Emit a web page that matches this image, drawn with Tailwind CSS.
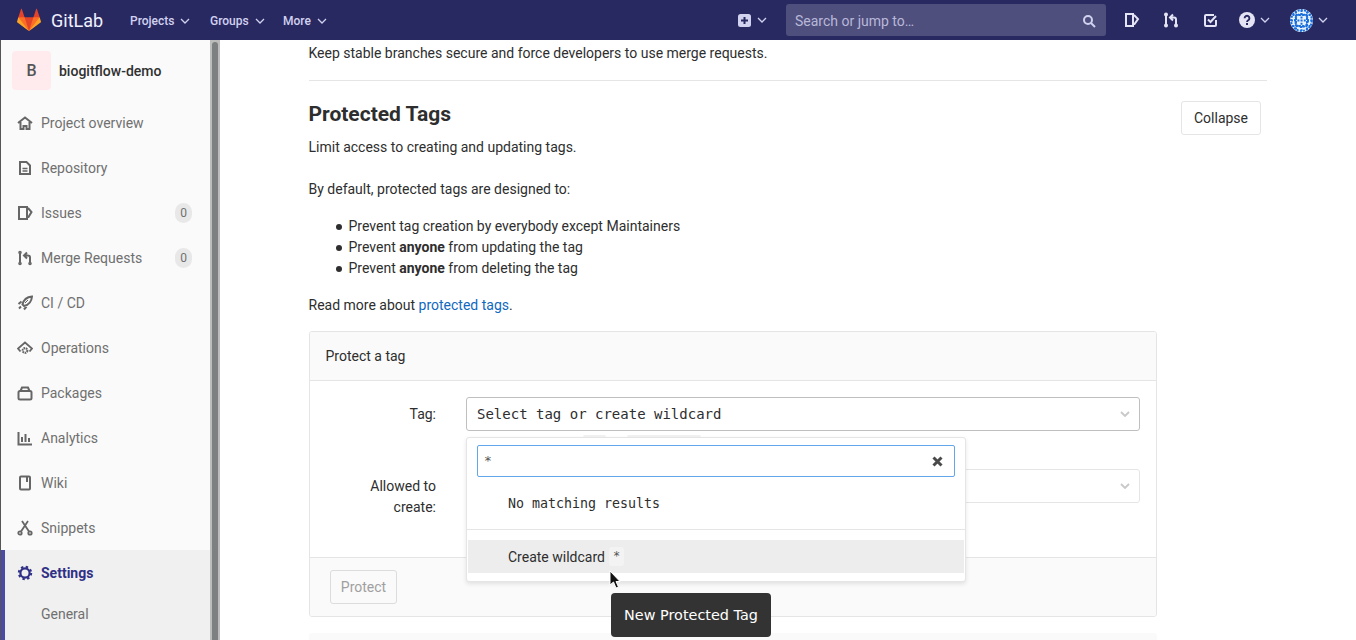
<!DOCTYPE html>
<html lang="en">
<head>
  <meta charset="UTF-8" />
  <title>Protected Tags - GitLab</title>
  <script src="https://cdn.jsdelivr.net/npm/@tailwindcss/browser@4"></script>
</head>
<body class="relative h-[640px] w-[1356px] overflow-hidden bg-white font-['Roboto',sans-serif] text-sm text-[#2e2e2e]">
  <!-- top nav -->
  <nav class="flex h-10 items-center bg-[#292961] pl-[17px] text-[#d1d1f0]">
    <svg width="24" height="24" viewBox="0 0 36 36">
      <path fill="#e24329" d="M2 14l9.38 9v-9l-4-12.28c-.205-.632-1.176-.632-1.38 0z"/>
      <path fill="#e24329" d="M34 14l-9.38 9v-9l4-12.28c.205-.632 1.176-.632 1.38 0z"/>
      <path fill="#e24329" d="M18,34.38 3,14 33,14 Z"/>
      <path fill="#fc6d26" d="M18,34.38 11.38,14 2,14 6,25Z"/>
      <path fill="#fc6d26" d="M18,34.38 24.62,14 34,14 30,25Z"/>
      <path fill="#fca326" d="M2 14L.1 20.16c-.18.565 0 1.2.5 1.56l17.42 12.66z"/>
      <path fill="#fca326" d="M34 14l1.9 6.16c.18.565 0 1.2-.5 1.56L18 34.38z"/>
    </svg>
    <span class="ml-[10px] w-[79px] pt-[1px] text-[18px] text-[#f0f0ff]">GitLab</span>
    <span class="flex w-[80px] items-center gap-[6px] pt-[1px] text-xs font-medium">Projects
      <svg width="10" height="10" viewBox="0 0 10 10" fill="none" stroke="currentColor" stroke-width="1.3"><path d="M1 3l4 4 4-4"/></svg></span>
    <span class="flex w-[73px] items-center gap-[6px] pt-[1px] text-xs font-medium">Groups
      <svg width="10" height="10" viewBox="0 0 10 10" fill="none" stroke="currentColor" stroke-width="1.3"><path d="M1 3l4 4 4-4"/></svg></span>
    <span class="flex w-[455px] items-center gap-[6px] pt-[1px] text-xs font-medium">More
      <svg width="10" height="10" viewBox="0 0 10 10" fill="none" stroke="currentColor" stroke-width="1.3"><path d="M1 3l4 4 4-4"/></svg></span>

    <svg width="13" height="13" viewBox="0 0 13 13"><rect width="13" height="13" rx="2.5" fill="#d1d1f0"/><path d="M6.5 3v7M3 6.5h7" stroke="#292961" stroke-width="2"/></svg>
    <svg class="ml-[6px]" width="10" height="10" viewBox="0 0 10 10" fill="none" stroke="currentColor" stroke-width="1.3"><path d="M1 3l4 4 4-4"/></svg>
    <div class="ml-[19px] flex h-8 w-[320px] items-center justify-between rounded-[3px] bg-[#4f4f7e] pl-[9px] pr-[10px] pt-[1px] text-[14px] text-[#b8b8d8]">
      <span>Search or jump to…</span>
      <svg width="14" height="14" viewBox="0 0 14 14" fill="none" stroke="#d1d1f0" stroke-width="2"><circle cx="6" cy="6" r="4"/><path d="M9 9l4 4"/></svg>
    </div>
    <svg class="ml-[18px]" width="16" height="16" viewBox="0 0 16 16" fill="none" stroke="#e4e4f4" stroke-width="2"><path d="M2 2h7v12H2zM9 3.5h1.5L14 7l-3.5 5H9"/></svg>
    <svg class="ml-[23px]" width="16" height="16" viewBox="0 0 16 16" fill="none" stroke="#e4e4f4" stroke-width="2"><circle cx="3" cy="2.5" r="1" /><circle cx="3" cy="13.5" r="1"/><circle cx="13" cy="13.5" r="1"/><path d="M3 4v8M13 12V7.5a2 2 0 0 0-2-2H8M10 2.5l-3 3 3 3" /></svg>
    <svg class="ml-[25px]" width="14" height="14" viewBox="0 0 14 14" fill="none" stroke="#e4e4f4" stroke-width="2"><path d="M12 7v5a1 1 0 0 1-1 1H2a1 1 0 0 1-1-1V3a1 1 0 0 1 1-1h8"/><path d="M4 6.5l2.5 2.5L12 3"/></svg>
    <svg class="ml-[21px]" width="16" height="16" viewBox="0 0 16 16"><circle cx="8" cy="8" r="8" fill="#e4e4f4"/><path d="M5.6 6.2a2.4 2.4 0 1 1 3.6 2.1c-.8.5-1.2.8-1.2 1.7" fill="none" stroke="#292961" stroke-width="1.9"/><rect x="7" y="11" width="2" height="2" fill="#292961"/></svg>
    <svg class="ml-[5px]" width="10" height="10" viewBox="0 0 10 10" fill="none" stroke="currentColor" stroke-width="1.3"><path d="M1 3l4 4 4-4"/></svg>
    <svg class="ml-[20px]" width="23" height="23" viewBox="0 0 23 23">
      <circle cx="11.5" cy="11.5" r="11.5" fill="#eaf2fc"/>
      <g fill="none" stroke="#1a6fdc" stroke-width="2" stroke-dasharray="2 1.2">
        <circle cx="11.5" cy="11.5" r="10.4"/><circle cx="11.5" cy="11.5" r="6.5"/><path d="M11.5 1v21M1 11.5h21M6 2.5v18M17 2.5v18M2.5 6h18M2.5 17h18"/>
      </g>
    </svg>
    <svg class="ml-[5px]" width="10" height="10" viewBox="0 0 10 10" fill="none" stroke="currentColor" stroke-width="1.3"><path d="M1 3l4 4 4-4"/></svg>
  </nav>

  <div class="flex h-[600px] overflow-hidden">
    <!-- sidebar -->
    <aside class="flex w-[220px] shrink-0 border-l border-[#555]">
      <div class="w-[209px] shrink-0 bg-[#fafafa] text-[#707070]">
        <div class="flex h-[60px] items-center pl-[11px] pt-[1px]">
          <div class="flex h-[39px] w-[39px] items-center justify-center rounded-[4px] bg-[#ffebee] text-base font-medium text-[#555]">B</div>
          <span class="ml-[8px] font-medium text-[#303030]">biogitflow-demo</span>
        </div>
        <ul>
          <li class="flex h-[45px] items-center pl-4">
            <svg class="mr-2 shrink-0" width="16" height="16" viewBox="0 0 16 16" fill="none" stroke="#666" stroke-width="2"><path d="M1 8l7-5.5L15 8M3.5 7v7h3v-3h3v3h3V7"/></svg>Project overview</li>
          <li class="flex h-[45px] items-center pl-4">
            <svg class="mr-2 shrink-0" width="16" height="16" viewBox="0 0 16 16" fill="none" stroke="#666" stroke-width="2"><path d="M3 2h6.5L13 5.5V14H3z"/><path d="M5.5 8.5h5M5.5 11h5" stroke-width="1.4"/></svg>Repository</li>
          <li class="flex h-[45px] items-center pl-4">
            <svg class="mr-2 shrink-0" width="16" height="16" viewBox="0 0 16 16" fill="none" stroke="#666" stroke-width="2"><path d="M2 2h8v12H2zM10 3.5h1.5L14.5 7l-3 5H10"/></svg>Issues
            <span class="ml-auto mr-[18px] flex h-5 w-[17px] items-center justify-center rounded-full bg-[#e8e8e8] text-xs text-[#707070]">0</span></li>
          <li class="flex h-[45px] items-center pl-4">
            <svg class="mr-2 shrink-0" width="16" height="16" viewBox="0 0 16 16" fill="none" stroke="#666" stroke-width="2"><circle cx="3" cy="2.5" r=".8"/><circle cx="3" cy="13.5" r=".8"/><circle cx="13" cy="13.5" r=".8"/><path d="M3 4v8M13 12V7.5a2 2 0 0 0-2-2H8M10 2.5l-3 3 3 3"/></svg>Merge Requests
            <span class="ml-auto mr-[18px] flex h-5 w-[17px] items-center justify-center rounded-full bg-[#e8e8e8] text-xs text-[#707070]">0</span></li>
          <li class="flex h-[45px] items-center pl-4">
            <svg class="mr-2 shrink-0" width="16" height="16" viewBox="0 0 16 16" fill="none" stroke="#666" stroke-width="2"><path d="M15 1.5C9.5 2 6.500 5 5.500 9.500l1.500 1.500C12 10 14.500 7 15 1.500zM4.500 6.500l-3 2.500M9.500 11.500l-2.500 3M4 11.500l-2 2"/><path d="M8 8l3-3" stroke-width="1"/></svg>CI / CD</li>
          <li class="flex h-[45px] items-center pl-4">
            <svg class="mr-2 shrink-0" width="16" height="16" viewBox="0 0 16 16" fill="none" stroke="#666" stroke-width="1.8"><path d="M3.500 11.500L1 8.500 8 2.500l7 6-2.500 3"/><circle cx="8" cy="10.500" r="2.300" stroke-width="2.200" stroke-dasharray="1.500 .6"/></svg>Operations</li>
          <li class="flex h-[45px] items-center pl-4">
            <svg class="mr-2 shrink-0" width="16" height="16" viewBox="0 0 16 16" fill="none" stroke="#666" stroke-width="2"><rect x="1.500" y="6" width="13" height="8.500" rx="1.500"/><path d="M3.500 6l1.500-3.500h6L12.500 6"/></svg>Packages</li>
          <li class="flex h-[45px] items-center pl-4">
            <svg class="mr-2 shrink-0" width="16" height="16" viewBox="0 0 16 16" fill="none" stroke="#666" stroke-width="2"><path d="M1.500 2v12.500H15M5 7v5M8.500 4v8M12 8v4"/></svg>Analytics</li>
          <li class="flex h-[45px] items-center pl-4">
            <svg class="mr-2 shrink-0" width="16" height="16" viewBox="0 0 16 16" fill="none" stroke="#666" stroke-width="2"><rect x="3" y="1.500" width="10" height="13" rx="1"/><path d="M10 2v5" stroke-width="2"/></svg>Wiki</li>
          <li class="flex h-[45px] items-center pl-4">
            <svg class="mr-2 shrink-0" width="16" height="16" viewBox="0 0 16 16" fill="none" stroke="#666" stroke-width="1.800"><circle cx="3" cy="13" r="1.700"/><circle cx="13" cy="13" r="1.700"/><path d="M4 11.500L11 1M12 11.500L5 1"/></svg>Snippets</li>
        </ul>
        <div class="h-[90px] border-l-4 border-[#4b4ba3] bg-[#f0f0f0]">
          <div class="flex h-[45px] items-center pl-3 font-bold text-[#303087]">
            <svg class="mr-2 shrink-0" width="16" height="16" viewBox="0 0 16 16" fill="none" stroke="#303087" stroke-width="2.200"><circle cx="8" cy="8" r="4.600"/><circle cx="8" cy="8" r="6.200" stroke-width="2" stroke-dasharray="2.400 2.470"/></svg>Settings</div>
          <div class="pl-[36px] leading-[39px]">General</div>
        </div>
      </div>
      <!-- scrollbar -->
      <div class="w-[10px] shrink-0 bg-[#bcbcbc] pl-[2px] pt-[2px]">
        <div class="h-full w-[6px] rounded-t-[3px] bg-[#7d8080]"></div>
      </div>
    </aside>

    <!-- main -->
    <main class="min-w-0 flex-1 pl-[89px] pr-[89px]">
      <p class="ml-[-0.5px] mt-[4px] leading-[18px]">Keep stable branches secure and force developers to use merge requests.</p>
      <hr class="mt-[18px] border-[#e5e5e5]" />
      <div class="mt-5 flex items-start justify-between pr-[6px]">
        <h4 class="ml-[-0.5px] text-[21px] font-bold leading-[26px] text-[#2e2e2e]">Protected Tags</h4>
        <button class="h-[34px] w-[80px] rounded-[3px] border border-[#e5e5e5] bg-white text-[14px]">Collapse</button>
      </div>
      <p class="ml-[-0.5px] mt-[2px] leading-5">Limit access to creating and updating tags.</p>
      <p class="ml-[-0.5px] mt-[22px] leading-5">By default, protected tags are designed to:</p>
      <ul class="ml-[39.5px] mt-[17px] leading-[21px]">
        <li class="flex items-center"><span class="ml-[-13px] mr-[7px] h-[6px] w-[6px] rounded-full bg-[#2e2e2e]"></span><span>Prevent tag creation by everybody except Maintainers</span></li>
        <li class="flex items-center"><span class="ml-[-13px] mr-[7px] h-[6px] w-[6px] rounded-full bg-[#2e2e2e]"></span><span>Prevent <b>anyone</b> from updating the tag</span></li>
        <li class="flex items-center"><span class="ml-[-13px] mr-[7px] h-[6px] w-[6px] rounded-full bg-[#2e2e2e]"></span><span>Prevent <b>anyone</b> from deleting the tag</span></li>
      </ul>
      <p class="ml-[-0.5px] mt-[16px] leading-5">Read more about <a class="text-[#1068bf]" href="#">protected tags</a>.</p>

      <div class="mt-4 h-[286px] w-[848px] overflow-hidden rounded-[3px] border border-[#e5e5e5]">
        <div class="flex h-[49px] items-center border-b border-[#e5e5e5] bg-[#fafafa] pl-[15.5px]">Protect a tag</div>
        <div class="h-[176px] pt-4">
          <div class="flex items-center">
            <label class="w-[126px] text-right">Tag:</label>
            <div class="ml-[30px] flex h-[34px] w-[674px] items-center justify-between rounded-[3px] border border-[#bfbfbf] pl-[10px] pr-[9px] font-['DejaVu_Sans_Mono',monospace] text-[14px] text-[#2e2e2e]">
              <span>Select tag or create wildcard</span>
              <svg width="10" height="10" viewBox="0 0 10 10" fill="none" stroke="#c8c8c8" stroke-width="1.800"><path d="M1 3l4 4 4-4"/></svg>
            </div>
          </div>
          <div class="mt-[38px] flex items-start">
            <label class="w-[126px] pl-[50px] pt-[7px] text-right leading-[21px]">Allowed to create:</label>
            <div class="ml-[30px] flex h-[34px] w-[674px] items-center justify-end rounded-[3px] border border-[#e5e5e5] pr-[9px]">
              <svg width="10" height="10" viewBox="0 0 10 10" fill="none" stroke="#c8c8c8" stroke-width="1.800"><path d="M1 3l4 4 4-4"/></svg>
            </div>
          </div>
        </div>
        <div class="flex h-[60px] items-center border-t border-[#e5e5e5] bg-[#fafafa] pb-[2px] pl-5">
          <button class="h-[34px] w-[67px] rounded-[3px] border border-[#dcdcdc] text-[14px] text-[#a0a0a0]">Protect</button>
        </div>
      </div>
      <div class="mt-4 h-10 w-[848px] rounded-[3px] bg-[#fafafa]"></div>
    </main>
  </div>

  <!-- open tag dropdown -->
  <div class="absolute left-[466px] top-[437px] h-[145px] w-[500px] rounded-[3px] border border-[#e5e5e5] bg-white shadow-[0_2px_4px_rgba(0,0,0,0.1)]">
    <div class="absolute left-[116px] top-[-3px] h-[2px] w-[23px] rounded-t-[3px] bg-[#f0f0f0]"></div>
    <div class="absolute left-[160px] top-[-3px] h-[2px] w-[74px] rounded-t-[3px] bg-[#f0f0f0]"></div>
    <div class="mx-[10px] mt-[7px] flex h-8 w-[478px] items-center justify-between rounded-[2px] border border-[#63a6e9] pl-[6px] pr-[11px] font-['DejaVu_Sans_Mono',monospace] text-[13px] text-[#555]">
      <span>*</span>
      <svg width="11" height="11" viewBox="0 0 11 11" stroke="#4a4a4a" stroke-width="3"><path d="M1.500 1.500l8 8M9.500 1.500l-8 8"/></svg>
    </div>
    <p class="mt-[9px] pl-[41px] font-['DejaVu_Sans_Mono',monospace] text-[13.3px] leading-[35px] text-[#2e2e2e]">No matching results</p>
    <div class="mt-[8px] border-t border-[#e5e5e5]"></div>
    <div class="ml-[1px] mr-[1px] mt-[10px] flex h-[33px] items-center bg-[#ededed] pl-[40px]">
      Create wildcard
      <code class="ml-[4px] rounded-[3px] bg-[#f3f3f3] px-1 font-['DejaVu_Sans_Mono',monospace] text-[12px] leading-[19px] text-[#555]">*</code>
    </div>
  </div>

  <!-- cursor -->
  <svg class="absolute left-[609px] top-[570px]" width="14" height="20" viewBox="0 0 14 20">
    <path d="M1 1v14l3.500-3 2.500 6 2.500-1-2.500-5.500H11z" fill="#111" stroke="#fff" stroke-width="1"/>
  </svg>

  <!-- tooltip -->
  <div class="absolute left-[611px] top-[593px] flex h-[44px] w-[160px] items-center justify-center rounded-[4px] bg-[#333] font-['DejaVu_Sans',sans-serif] text-[14.4px] text-white">New Protected Tag</div>
</body>
</html>
